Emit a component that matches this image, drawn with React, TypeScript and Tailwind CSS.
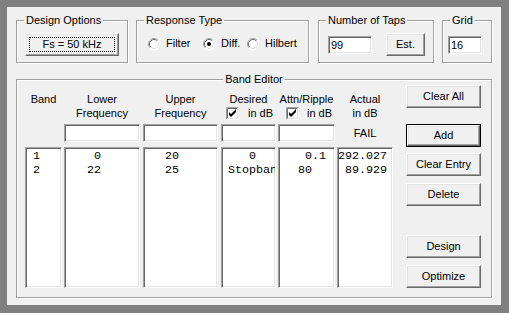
import React from 'react';

const raised =
  'border border-t-white border-l-white border-b-[#696969] border-r-[#696969] shadow-[inset_-1px_-1px_0_#a0a0a0,inset_1px_1px_0_#e3e3e3] bg-[#f0f0f0]';
const sunken =
  'border border-t-[#a0a0a0] border-l-[#a0a0a0] border-b-white border-r-white shadow-[inset_1px_1px_0_#696969,inset_-1px_-1px_0_#e3e3e3] bg-white';

type Kids = { children?: React.ReactNode; className?: string };

const Group = ({ title, children, className = '', center = false }: Kids & { title: string; center?: boolean }) => (
  <div className={`relative border border-[#a0a0a0] shadow-[inset_1px_1px_0_#fff,1px_1px_0_#fff] ${className}`}>
    <span
      className={`absolute top-[-7px] px-[2px] bg-[#f0f0f0] whitespace-nowrap ${
        center ? 'left-1/2 -translate-x-1/2' : 'left-[7px]'
      }`}
    >
      {title}
    </span>
    {children}
  </div>
);

const Button = ({ children, className = '', focused = false, isDefault = false }: Kids & { focused?: boolean; isDefault?: boolean }) =>
  isDefault ? (
    <div className={`border border-[#000] flex ${className}`}>
      <div className={`${raised} flex-1 flex items-center justify-center`}>{children}</div>
    </div>
  ) : (
    <div className={`relative ${raised} flex items-center justify-center ${className}`}>
      {focused && <span className="absolute inset-x-[3px] top-[3px] bottom-[3px] border border-dotted border-black" />}
      {children}
    </div>
  );

const Field = ({ children, className = '' }: Kids) => (
  <div className={`${sunken} pl-[2px] flex items-center ${className}`}>{children}</div>
);

const Radio = ({ on = false }: { on?: boolean }) => (
  <svg width="12" height="12" viewBox="0 0 12 12" className="block shrink-0">
    <circle cx="6" cy="6" r="5" fill="#fff" />
    <path d="M2.11 9.89A5.5 5.5 0 0 1 9.89 2.11" stroke="#a0a0a0" fill="none" />
    <path d="M9.89 2.11A5.5 5.5 0 0 1 2.11 9.89" stroke="#fff" fill="none" />
    <path d="M2.82 9.18A4.5 4.5 0 0 1 9.18 2.82" stroke="#696969" fill="none" />
    <path d="M9.18 2.82A4.5 4.5 0 0 1 2.82 9.18" stroke="#e3e3e3" fill="none" />
    {on && <circle cx="6" cy="6" r="2" fill="#000" />}
  </svg>
);

const Check = () => (
  <svg width="13" height="13" viewBox="0 0 13 13" className="block shrink-0">
    <rect width="13" height="13" fill="#fff" />
    <path d="M0.5 12.5V0.5H12.5" stroke="#a0a0a0" fill="none" />
    <path d="M1.5 11.5V1.5H11.5" stroke="#696969" fill="none" />
    <path d="M0.5 12.5H12.5V0.5" stroke="#fff" fill="none" />
    <path d="M1.5 11.5H11.5V1.5" stroke="#e3e3e3" fill="none" />
    <path d="M3 5L5 7L10 2V5L5 10L3 8Z" fill="#000" />
  </svg>
);

const List = ({ rows, className = '' }: { rows: string[]; className?: string }) => (
  <div
    className={`${sunken} overflow-hidden pt-[1px] font-['Liberation_Mono','Courier_New',monospace] text-[11.7px] leading-[14px] whitespace-pre ${className}`}
  >
    {rows.map((r, i) => (
      <div key={i}>{r}</div>
    ))}
  </div>
);

export default function App() {
  return (
    <div className="w-[509px] h-[313px] bg-[#808080] pl-[7px] pt-[7px] font-['Liberation_Sans',Arial,sans-serif] text-[11px] leading-[13px] text-black">
      <div className="w-[494px] h-[298px] bg-[#f0f0f0] pl-[9px] pt-[13px]">
        <div className="flex items-start">
          <Group title="Design Options" className="w-[112px] h-[43px] pl-[8px] pt-[12px]">
            <Button focused className="w-[94px] h-[23px]">
              Fs = 50 kHz
            </Button>
          </Group>

          <Group title="Response Type" className="ml-[8px] w-[173px] h-[43px] pl-[11px] pt-[16px]">
            <div className="flex items-center h-[13px]">
              <div className="w-[55px] flex items-center gap-[6px]">
                <Radio />
                <span>Filter</span>
              </div>
              <div className="w-[44px] flex items-center gap-[6px]">
                <Radio on />
                <span>Diff.</span>
              </div>
              <div className="flex items-center gap-[6px]">
                <Radio />
                <span>Hilbert</span>
              </div>
            </div>
          </Group>

          <Group title="Number of Taps" className="ml-[9px] w-[116px] h-[43px] pl-[9px] pt-[12px] flex items-start">
            <Field className="mt-[3px] w-[44px] h-[18px]">99</Field>
            <Button className="ml-[14px] w-[39px] h-[23px]">Est.</Button>
          </Group>

          <Group title="Grid" className="ml-[8px] w-[50px] h-[43px] pl-[5px] pt-[15px]">
            <Field className="w-[34px] h-[18px]">16</Field>
          </Group>
        </div>

        <Group title="Band Editor" center className="mt-[16px] w-[476px] h-[219px] pl-[8px] flex items-start">
          <div className="mt-[12px] flex flex-col">
            <div className="flex h-[28px] leading-[14px] whitespace-nowrap">
              <div className="w-[37px] text-center">Band</div>
              <div className="ml-[2px] w-[76px] text-center">
                <div>Lower</div>
                <div>Frequency</div>
              </div>
              <div className="ml-[3px] w-[75px] text-center">
                <div>Upper</div>
                <div>Frequency</div>
              </div>
              <div className="ml-[3px] w-[55px]">
                <div className="text-center">Desired</div>
                <div className="flex items-center pl-[5px] gap-[9px]">
                  <Check />
                  <span>in dB</span>
                </div>
              </div>
              <div className="ml-[2px] w-[57px]">
                <div className="text-center">Attn/Ripple</div>
                <div className="flex items-center pl-[8px] gap-[8px]">
                  <Check />
                  <span>in dB</span>
                </div>
              </div>
              <div className="ml-[2px] w-[56px] text-center">
                <div>Actual</div>
                <div>in dB</div>
              </div>
            </div>

            <div className="mt-[4px] flex h-[18px]">
              <div className="w-[37px]" />
              <Field className="ml-[2px] w-[76px] h-[18px]" />
              <Field className="ml-[3px] w-[75px] h-[18px]" />
              <Field className="ml-[3px] w-[55px] h-[18px]" />
              <Field className="ml-[2px] w-[57px] h-[18px]" />
              <div className="ml-[2px] w-[56px] flex items-center justify-center">FAIL</div>
            </div>

            <div className="mt-[5px] flex h-[141px]">
              <List className="w-[37px] pl-[7px]" rows={['1', '2']} />
              <List className="ml-[2px] w-[76px] pl-[8px]" rows={['   0', '  22']} />
              <List className="ml-[3px] w-[75px] pl-[7px]" rows={['  20', '  25']} />
              <List className="ml-[3px] w-[55px] pl-[6px]" rows={['   0', 'Stopband']} />
              <List className="ml-[2px] w-[57px] pl-[5px]" rows={['   0.1', '  80']} />
              <List className="ml-[2px] w-[56px]" rows={['292.027', ' 89.929']} />
            </div>
          </div>

          <div className="ml-[13px] mt-[5px] w-[75px] flex flex-col">
            <Button className="h-[23px]">Clear All</Button>
            <Button isDefault className="mt-[16px] h-[23px]">
              Add
            </Button>
            <Button className="mt-[6px] h-[23px]">Clear Entry</Button>
            <Button className="mt-[7px] h-[23px]">Delete</Button>
            <Button className="mt-[29px] h-[23px]">Design</Button>
            <Button className="mt-[7px] h-[23px]">Optimize</Button>
          </div>
        </Group>
      </div>
    </div>
  );
}
